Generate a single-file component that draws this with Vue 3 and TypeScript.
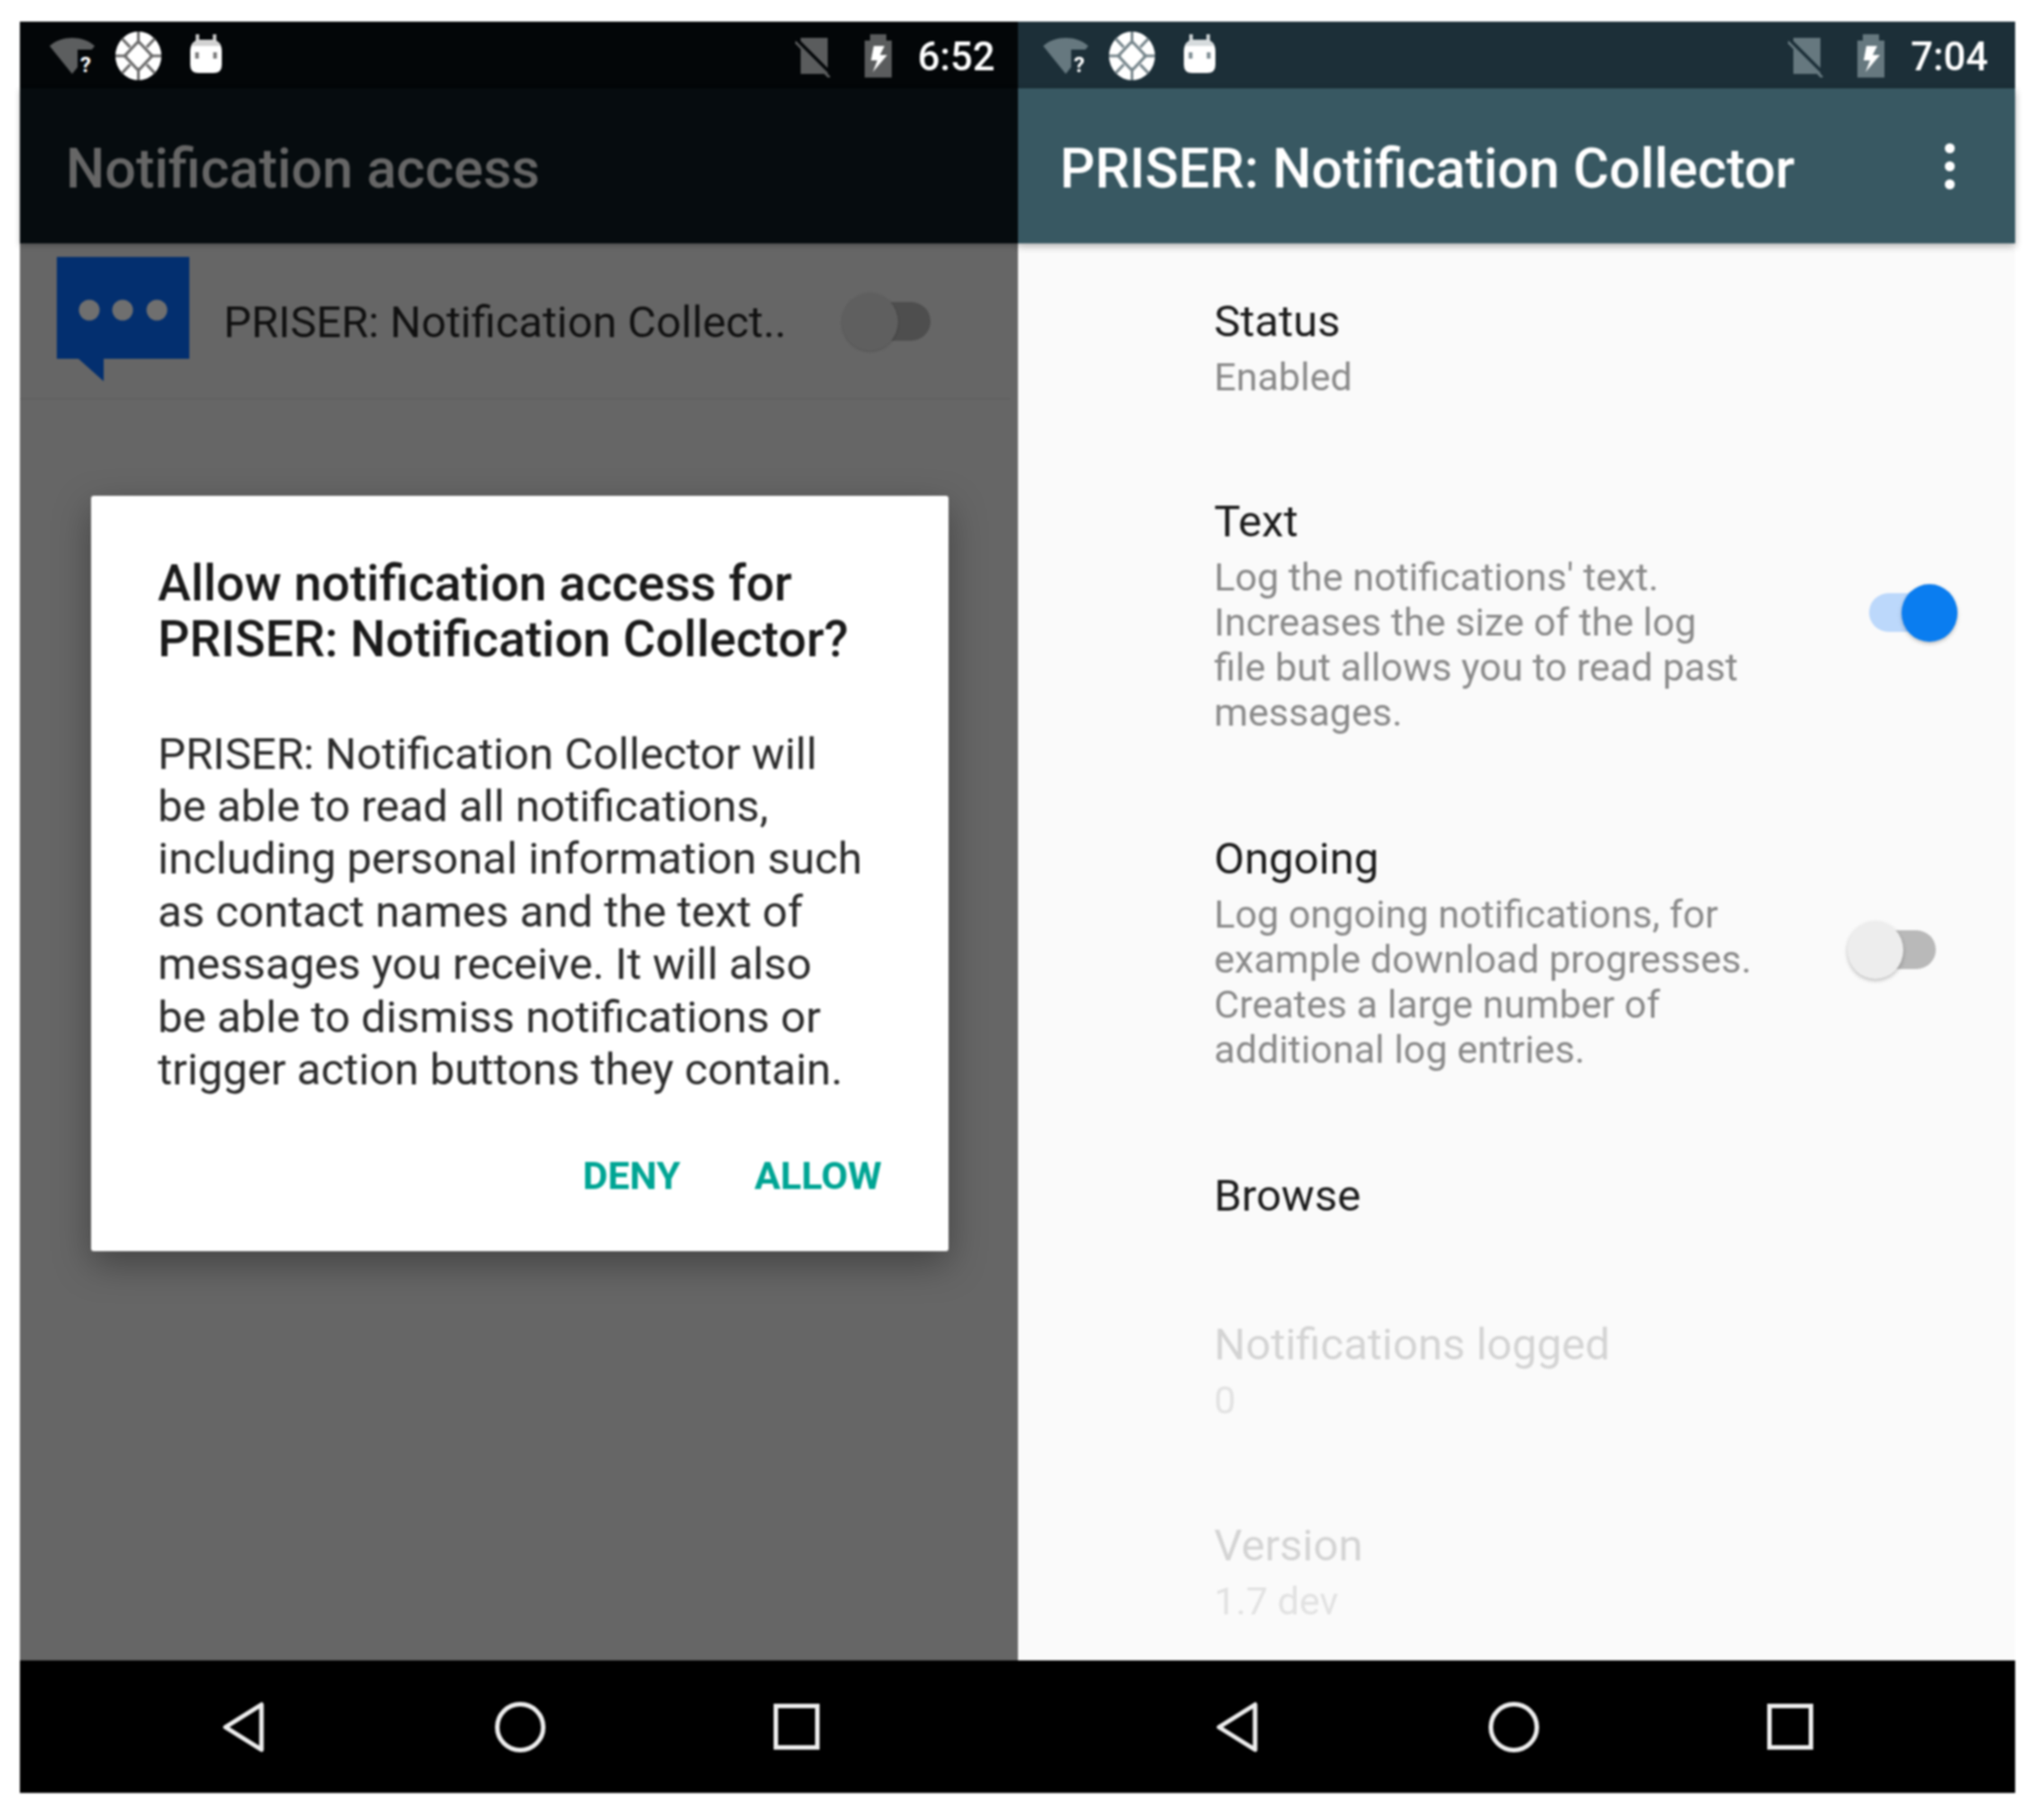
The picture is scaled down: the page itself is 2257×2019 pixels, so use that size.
<template>
  <div class="page">
    <div class="phones">
      <!-- left: system permission dialog -->
      <section class="phone phone--dim">
        <div class="status status--dim">
          <div class="status-left">
            <svg class="ic-wifi" viewBox="0 0 50 40"><path d="M0 9C13 -3 37 -3 50 9L25 40Z" fill="#5c5e5f" /><rect x="31" y="13" width="19" height="27" fill="#030608" /><text x="34" y="38" class="q">?</text></svg>
            <svg class="ic-wheel" viewBox="0 0 50 50" preserveAspectRatio="none">
              <circle cx="25" cy="25" r="25" fill="#fff" />
              <g stroke="#6e6e6e" stroke-width="3" fill="none">
                <path d="M25 0V13M25 37V50M0 25H13M37 25H50M7 7L16 16M34 34L43 43M43 7L34 16M16 34L7 43" />
                <path d="M25 10L40 25L25 40L10 25Z" />
              </g>
            </svg>
            <svg class="ic-droid" viewBox="0 0 37 43">
              <path d="M9 0V10M28 0V10" stroke="#c4c4c4" stroke-width="4" />
              <path d="M1 19Q1 6 14 6H23Q36 6 36 19V34Q36 43 27 43H10Q1 43 1 34Z" fill="#fff" />
              <path d="M2 13Q5 6 14 6H23Q32 6 35 13Z" fill="#d2d2d2" />
              <rect x="6.5" y="20" width="4" height="7" fill="#777" />
              <rect x="26.5" y="20" width="4" height="7" fill="#777" />
            </svg>
          </div>
          <div class="status-right">
            <svg class="ic-sim" viewBox="0 0 40 44"><path d="M6 0H36V40H6Z" fill="#5a5c5d" /><path d="M0 4L38 44" stroke="#5a5c5d" stroke-width="3" /><path d="M1 1L40 40" stroke="#030608" stroke-width="3.5" /></svg>
            <svg class="ic-batt" viewBox="0 0 30 48"><path d="M6 0H24V7H30V48H0V7H6Z" fill="#5a5c5d" /><path d="M10 13H22L17 23H25L9 42L14 29H7Z" fill="#fff" /></svg>
            <span class="clock">6:52</span>
          </div>
        </div>
        <header class="bar bar--dim"><h1 class="bar-title bar-title--dim">Notification access</h1></header>
        <main class="content content--dim">
          <div class="access-row">
            <svg class="app-icon" viewBox="0 0 147 138">
              <path d="M0 0H147V113H52V138L24 113H0Z" fill="#032f6f" />
              <circle cx="36" cy="59" r="11.5" fill="#6f6f6f" /><circle cx="73" cy="59" r="11.5" fill="#6f6f6f" /><circle cx="111" cy="59" r="11.5" fill="#6f6f6f" />
            </svg>
            <span class="access-name">PRISER: Notification Collect..</span>
            <span class="switch switch--dim"><i class="track" /><i class="thumb" /></span>
          </div>
          <div class="dialog">
            <h2 class="dialog-title">Allow notification access for<br />PRISER: Notification Collector?</h2>
            <p class="dialog-body">PRISER: Notification Collector will<br />be able to read all notifications,<br />including personal information such<br />as contact names and the text of<br />messages you receive. It will also<br />be able to dismiss notifications or<br />trigger action buttons they contain.</p>
            <div class="dialog-actions">
              <button class="action">DENY</button>
              <button class="action">ALLOW</button>
            </div>
          </div>
        </main>
        <nav class="nav">
          <svg class="nav-back" viewBox="0 0 48 56"><path d="M44 3V53L4 28Z" fill="none" stroke="#eee" stroke-width="5" stroke-linejoin="round" /></svg>
          <span class="nav-home" />
          <span class="nav-recent" />
        </nav>
      </section>

      <!-- right: app settings -->
      <section class="phone">
        <div class="status status--app">
          <div class="status-left">
            <svg class="ic-wifi" viewBox="0 0 50 40"><path d="M0 9C13 -3 37 -3 50 9L25 40Z" fill="#66787f" /><rect x="31" y="13" width="19" height="27" fill="#1c2f38" /><text x="34" y="38" class="q">?</text></svg>
            <svg class="ic-wheel" viewBox="0 0 50 50" preserveAspectRatio="none">
              <circle cx="25" cy="25" r="25" fill="#fff" />
              <g stroke="#78878d" stroke-width="3" fill="none">
                <path d="M25 0V13M25 37V50M0 25H13M37 25H50M7 7L16 16M34 34L43 43M43 7L34 16M16 34L7 43" />
                <path d="M25 10L40 25L25 40L10 25Z" />
              </g>
            </svg>
            <svg class="ic-droid" viewBox="0 0 37 43">
              <path d="M9 0V10M28 0V10" stroke="#cbd1d3" stroke-width="4" />
              <path d="M1 19Q1 6 14 6H23Q36 6 36 19V34Q36 43 27 43H10Q1 43 1 34Z" fill="#fff" />
              <path d="M2 13Q5 6 14 6H23Q32 6 35 13Z" fill="#d6dbdd" />
              <rect x="6.5" y="20" width="4" height="7" fill="#7b8a90" />
              <rect x="26.5" y="20" width="4" height="7" fill="#7b8a90" />
            </svg>
          </div>
          <div class="status-right">
            <svg class="ic-sim" viewBox="0 0 40 44"><path d="M6 0H36V40H6Z" fill="#66787f" /><path d="M0 4L38 44" stroke="#66787f" stroke-width="3" /><path d="M1 1L40 40" stroke="#1c2f38" stroke-width="3.5" /></svg>
            <svg class="ic-batt" viewBox="0 0 30 48"><path d="M6 0H24V7H30V48H0V7H6Z" fill="#66787f" /><path d="M10 13H22L17 23H25L9 42L14 29H7Z" fill="#fff" /></svg>
            <span class="clock">7:04</span>
          </div>
        </div>
        <header class="bar bar--app">
          <h1 class="bar-title">PRISER: Notification Collector</h1>
          <span class="overflow"><i /><i /><i /></span>
        </header>
        <main class="content">
          <div v-for="row in rows" :key="row.title" class="pref" :class="{ 'pref--off': row.disabled }" :style="{ height: row.height + 'px' }">
            <div class="pref-text">
              <div class="pref-title">{{ row.title }}</div>
              <div v-if="row.lines" class="pref-sub">
                <div v-for="line in row.lines" :key="line">{{ line }}</div>
              </div>
            </div>
            <span v-if="row.toggle" class="switch" :class="'switch--' + row.toggle"><i class="track" /><i class="thumb" /></span>
          </div>
        </main>
        <nav class="nav nav--app">
          <svg class="nav-back" viewBox="0 0 48 56"><path d="M44 3V53L4 28Z" fill="none" stroke="#eee" stroke-width="5" stroke-linejoin="round" /></svg>
          <span class="nav-home" />
          <span class="nav-recent" />
        </nav>
      </section>
    </div>
  </div>
</template>

<script setup lang="ts">
interface Row {
  title: string
  lines?: string[]
  toggle?: 'on' | 'off'
  disabled?: boolean
  height: number
}

const rows: Row[] = [
  { title: 'Status', lines: ['Enabled'], height: 222 },
  { title: 'Text', lines: ["Log the notifications' text.", 'Increases the size of the log', 'file but allows you to read past', 'messages.'], toggle: 'on', height: 374 },
  { title: 'Ongoing', lines: ['Log ongoing notifications, for', 'example download progresses.', 'Creates a large number of', 'additional log entries.'], toggle: 'off', height: 374 },
  { title: 'Browse', height: 165 },
  { title: 'Notifications logged', lines: ['0'], disabled: true, height: 223 },
  { title: 'Version', lines: ['1.7 dev'], disabled: true, height: 214 },
]
</script>

<style>
html, body { background: #fff; }
</style>

<style scoped>
.page {
  width: 2257px;
  height: 2019px;
  padding: 24px 22px 0;
  box-sizing: border-box;
  background: #fff;
  font-family: Roboto, "Liberation Sans", sans-serif;
}

.phones {
  display: flex;
  height: 1965px;
  filter: blur(1.1px);
}

.phone {
  width: 1106.5px;
  display: flex;
  flex-direction: column;
}

.status {
  height: 74px;
  display: flex;
  justify-content: space-between;
  align-items: flex-start;
  padding: 0 25px 0 33px;
  box-sizing: border-box;
  flex: none;
}
.status--dim { background: #030608; }
.status--app { background: #1c2f38; padding: 0 30px 0 28px; }

.status-left, .status-right { display: flex; align-items: flex-start; }

.ic-wifi { width: 50px; height: 40px; margin-top: 18px; overflow: visible; }
.ic-wheel { width: 51px; height: 54px; margin-top: 11px; margin-left: 23px; }
.ic-droid { width: 37px; height: 43px; margin-top: 14px; margin-left: 31px; }
.ic-sim { width: 40px; height: 44px; margin-top: 18px; }
.ic-batt { width: 30px; height: 48px; margin-top: 14px; margin-left: 37px; }
.q { font-size: 24px; font-weight: 700; fill: #fff; font-family: Roboto, sans-serif; }

.clock {
  color: #fff;
  font-size: 43.5px;
  font-weight: 500;
  line-height: 50px;
  margin-top: 15px;
  margin-left: 29px;
}

.bar {
  height: 172px;
  display: flex;
  align-items: center;
  justify-content: space-between;
  padding: 6px 67px 0 47px;
  box-sizing: border-box;
  flex: none;
  position: relative;
  z-index: 1;
}
.bar--dim { background: #060c0f; padding-left: 51px; box-shadow: 0 2px 6px rgba(0, 0, 0, 0.25); }
.bar--app { background: #385862; box-shadow: 0 3px 8px rgba(0, 0, 0, 0.3); }

.bar-title {
  margin: 0;
  color: #fff;
  font-size: 61px;
  font-weight: 500;
}
.bar-title--dim { color: #666; }

.overflow { display: flex; flex-direction: column; gap: 9px; margin-top: -6px; }
.overflow i { width: 11px; height: 11px; border-radius: 50%; background: #fff; }

.content {
  flex: 1;
  background: #fafafa;
  position: relative;
  overflow: hidden;
}
.content--dim { background: #666; }

.access-row {
  height: 174px;
  margin: 0 9px 0 0;
  border-bottom: 3px solid #626262;
  display: flex;
  align-items: flex-start;
  padding-left: 41px;
  box-sizing: border-box;
}
.app-icon { width: 147px; height: 138px; margin-top: 15px; flex: none; }
.access-name {
  font-size: 48.7px;
  color: #111;
  margin-left: 38px;
  margin-top: 60px;
  line-height: 56px;
  white-space: nowrap;
}

.switch { position: relative; width: 98px; height: 64px; flex: none; display: block; }
.switch .track { position: absolute; left: 18px; right: 0; top: 10px; height: 43px; border-radius: 22px; background: #b9b9b9; }
.switch .thumb { position: absolute; left: 0; top: 0; width: 62px; height: 64px; border-radius: 50%; background: #ededed; box-shadow: 0 2px 4px rgba(0, 0, 0, 0.25); }
.switch--dim { margin-left: auto; margin-right: 88px; margin-top: 55px; }
.switch--dim .track { background: #4e4e4e; }
.switch--dim .thumb { background: #5f5f5f; box-shadow: 0 1px 3px rgba(0, 0, 0, 0.2); }
.switch--on .track { left: 0; background: #bcd8fb; }
.switch--on .thumb { left: 36px; background: #0a7df0; }

.dialog {
  position: absolute;
  left: 79px;
  top: 280px;
  width: 951px;
  height: 838px;
  background: #fff;
  border-radius: 3px;
  box-shadow: 0 14px 40px rgba(0, 0, 0, 0.35);
  padding: 67px 74px 0;
  box-sizing: border-box;
}
.dialog-title {
  margin: 0;
  font-size: 55.3px;
  font-weight: 500;
  line-height: 61.5px;
  color: #1a1a1a;
}
.dialog-body {
  margin: 67.5px 0 0;
  font-size: 49px;
  line-height: 58.4px;
  color: #2c2c2c;
}
.dialog-actions {
  display: flex;
  justify-content: flex-end;
  gap: 82px;
  margin-top: 62.5px;
}
.action {
  border: none;
  background: none;
  padding: 0;
  font: 700 43px Roboto, sans-serif;
  color: #00a594;
}

.pref {
  position: relative;
  display: flex;
  justify-content: space-between;
  padding: 58px 62px 0 218px;
  box-sizing: border-box;
}
.pref-title { font-size: 49px; line-height: 58px; color: #1c1c1c; }
.pref-sub { font-size: 43px; line-height: 50px; color: #8a8a8a; margin-top: 7px; }
.pref--off .pref-title { color: #d4d4d4; }
.pref--off .pref-sub { color: #e2e2e2; }
.pref .switch { position: absolute; right: 64px; top: 156px; }
.pref .switch--off { right: 88px; }

.nav {
  height: 147px;
  background: #000;
  display: flex;
  align-items: center;
  padding-left: 224px;
  box-sizing: border-box;
  flex: none;
}
.nav--app { padding-left: 219px; }
.nav-back { width: 48px; height: 56px; }
.nav-home { width: 46px; height: 46px; border: 5px solid #eee; border-radius: 50%; margin-left: 255px; }
.nav-recent { width: 41px; height: 41px; border: 5px solid #eee; margin-left: 253px; }
</style>
